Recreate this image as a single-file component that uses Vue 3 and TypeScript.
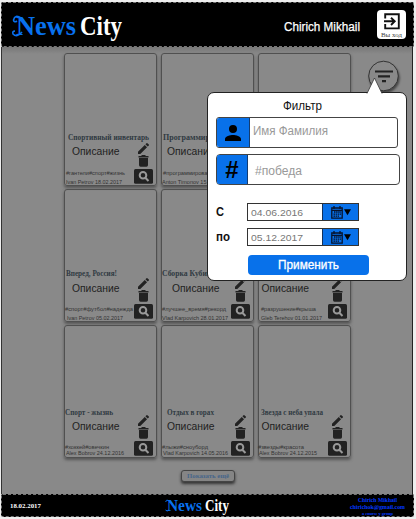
<script setup lang="ts">
import { defineComponent, h } from 'vue'

/* One line of text set to an exact measure; its baseline is the box's bottom edge. */
const FitText = defineComponent({
  props: {
    text: { type: String, required: true },
    w: { type: Number, required: true },
    size: { type: Number, required: true },
    x: { type: Number, default: 0 },
    high: { type: Number, default: 0 },
  },
  setup(p) {
    return () => {
      const box = p.high || p.size
      return h('svg', { width: p.w + p.x, height: box, class: 'fit' }, p.text ? [
        h('text', { x: p.x, y: box, 'font-size': p.size, textLength: p.w, lengthAdjust: 'spacingAndGlyphs', fill: 'currentColor' }, p.text),
      ] : [])
    }
  },
})

interface Card {
  title: string; tx: number; tw: number
  desc?: string; dx: number
  tags: string; gx: number; gw: number
  author: string; ax: number; aw: number
}
const rows: Card[][] = [
  [
    { title: 'Спортивный инвентарь', tx: 4, tw: 81, dx: 8, tags: '#гантели#спорт#жизнь', gx: 2, gw: 59, author: 'Ivan Petrov 18.02.2017', ax: 2, aw: 56 },
    { title: 'Программирование', tx: 2, tw: 72, dx: 6, tags: '#программирование', gx: 2, gw: 54, author: 'Anton Timonov 15.02.2017', ax: 1, aw: 66 },
    { title: '', tx: 3, tw: 34, desc: '', dx: 3, tags: '', gx: 2, gw: 30, author: '', ax: 2, aw: 56 },
  ],
  [
    { title: 'Вперед, Россия!', tx: 2, tw: 51, dx: 8, tags: '#спорт#футбол#надежда', gx: 1, gw: 68, author: 'Ivan Petrov 05.02.2017', ax: 3, aw: 56 },
    { title: 'Сборка Кубика', tx: 1, tw: 53, dx: 11, tags: '#лучшее_время#рекорд', gx: 1, gw: 64, author: 'Vlad Karpovich 28.01.2017', ax: 1, aw: 66 },
    { title: '', tx: 3, tw: 28, dx: 3.5, tags: '#разрушение#крыша', gx: 3, gw: 55, author: 'Gleb Terehov 01.01.2017', ax: 3, aw: 61 },
  ],
  [
    { title: 'Спорт - жызнь', tx: 1, tw: 48, dx: 8, tags: '#хоккей#овечкин', gx: 1, gw: 44, author: 'Alex Bobrov 24.12.2016', ax: 2, aw: 58 },
    { title: 'Отдых в горах', tx: 6, tw: 47, dx: 6, tags: '#лыжи#сноуборд', gx: 1, gw: 46, author: 'Vlad Karpovich 14.05.2016', ax: 2, aw: 65 },
    { title: 'Звезда с неба упала', tx: 3, tw: 62, dx: 3.5, tags: '#звезды#красота', gx: 0, gw: 46, author: 'Alex Bobrov 24.12.2015', ax: 1, aw: 58 },
  ],
]
const dates = [
  { label: 'С', w: 8, value: '04.06.2016' },
  { label: 'по', w: 14, value: '05.12.2017' },
]
</script>

<template>
  <div class="page">
    <header class="top">
      <svg class="logo" width="112" height="34" viewBox="0 0 112 34">
        <text x="4" y="26" textLength="60" lengthAdjust="spacingAndGlyphs" class="blue">News</text>
        <text x="68" y="26" textLength="42" lengthAdjust="spacingAndGlyphs" class="white">City</text>
        <path d="M9 9Q3 5 1.500 11Q2 14 5 12M10 23Q5 29 1 25Q0 22 3 22" class="swash" />
      </svg>
      <FitText class="user" text="Chirich Mikhail" :w="76" :size="12.500" :high="13" />
      <button class="logout">
        <svg width="16" height="17" viewBox="0 0 16 17">
          <path d="M1.200 5.500V1.200H14.800V15.400H1.200V11M0 8.300H10.500M7 4.700L10.700 8.300L7 12" fill="none" stroke="#111" stroke-width="1.900" />
        </svg>
        <FitText text="Вы ход" :w="21" :size="6" :high="7" />
      </button>
    </header>

    <main class="feed">
      <section class="cards">
        <template v-for="(row, r) in rows" :key="r">
          <article v-for="(c, i) in row" :key="i" class="card" :class="'row' + r">
            <FitText class="title" :text="c.title" :x="c.tx" :w="c.tw" :size="7.200" :high="7" />
            <div class="body">
              <div class="texts">
                <FitText class="desc" :text="c.desc ?? 'Описание'" :x="c.dx" :w="47.500" :size="10" />
                <FitText class="tags" :text="c.tags" :x="c.gx" :w="c.gw" :size="6" />
                <FitText class="author" :text="c.author" :x="c.ax" :w="c.aw" :size="6" />
              </div>
              <div class="actions">
                <svg width="11" height="11" viewBox="3 3 18 18"><path d="M3 17.250V21h3.750L17.810 9.940l-3.750-3.750L3 17.250zM20.710 7.040a1 1 0 0 0 0-1.410l-2.340-2.340a1 1 0 0 0-1.410 0l-1.830 1.830 3.750 3.750 1.830-1.830z" /></svg>
                <svg class="bin" width="11" height="12" viewBox="0 0 11 12"><path d="M.500 1H3L4 0H7L8 1H10.500V2.500H.500zM1 3H10V10Q10 11.700 8.500 11.700H2.500Q1 11.700 1 10z" /></svg>
                <svg class="find" width="19" height="15" viewBox="0 0 19 15">
                  <rect width="19" height="14.700" rx="1.500" /><circle cx="9" cy="6.300" r="3.300" class="lens" /><path d="M11.300 8.700L14.500 12" class="lens" />
                </svg>
              </div>
            </div>
          </article>
        </template>
      </section>
      <button class="more"><FitText text="Показать ещё" :w="42" :size="7" /></button>
    </main>

    <footer class="bottom">
      <FitText class="date" text="18.02.2017" :w="31" :size="7" />
      <svg class="brand" width="65" height="20" viewBox="0 0 65 20">
        <text x="2" y="15" textLength="35" lengthAdjust="spacingAndGlyphs" class="blue">News</text>
        <text x="40" y="15" textLength="24" lengthAdjust="spacingAndGlyphs" class="white">City</text>
        <path d="M4 5Q1 3 .800 6M4 14Q2 16 .500 14" class="swash thin" />
      </svg>
      <address>
        <FitText text="Chirich Mikhail" :w="39" :size="7" />
        <FitText text="chirichok@gmail.com" :w="55" :size="7" />
        <FitText text="a course y group" :w="31" :size="4.500" :high="6" />
      </address>
    </footer>

    <svg class="filter" width="36" height="36" viewBox="0 0 36 36">
      <circle cx="17.500" cy="16" r="14.800" />
      <path d="M9 11.500H27M12 16.300H24M16 21.200H20" />
    </svg>

    <form class="popup" @submit.prevent>
      <svg class="arrow" width="18" height="17" viewBox="0 0 18 17"><path d="M1 16.500L8.500 1L16 16.500" /></svg>
      <FitText class="heading" text="Фильтр" :w="39" :size="12.500" :high="13" />
      <label class="field">
        <span class="tab"><svg width="16" height="16" viewBox="4 4 16 16"><path d="M12 12a4 4 0 1 0 0-8 4 4 0 0 0 0 8zm0 2c-2.670 0-8 1.340-8 4v2h16v-2c0-2.660-5.330-4-8-4z" /></svg></span>
        <FitText text="Имя Фамилия" :w="75" :size="12.500" :high="13" :x="3" />
      </label>
      <label class="field hash">
        <span class="tab">#</span>
        <FitText text="#победа" :w="47" :size="12.500" :high="13" :x="7" />
      </label>
      <div v-for="d in dates" :key="d.label" class="period">
        <div class="name"><FitText :text="d.label" :w="d.w" :size="12" /></div>
        <div class="picker">
          <div class="value"><FitText :text="d.value" :w="52" :size="9.500" :high="10" /></div>
          <div class="open">
            <svg width="21" height="13" viewBox="0 0 21 13">
              <path d="M.800 2H11.200V12.200H.800zM1 4.300H11M3 0V3M9 0V3" fill="none" stroke="#06122b" stroke-width="1.300" />
              <path d="M3 6H10M2.500 8.100H10M2.500 10.200H8" stroke="#06122b" stroke-width="1.300" stroke-dasharray="1.500 .6" />
              <path d="M13 3.300H20L16.500 9.300z" />
            </svg>
          </div>
        </div>
      </div>
      <button class="apply"><FitText text="Применить" :w="61" :size="12" /></button>
    </form>
  </div>
</template>

<style>
body { background: #eee; overflow: hidden; }
</style>

<style scoped>
* { box-sizing: border-box; }
svg { display: block; flex: none; overflow: visible; }
button { padding: 0; margin: 0; border: 0; }
.page { position: relative; width: 416px; height: 519px; padding: 2px 2px 2px 1px; background: #eee; font-family: "Liberation Sans", Arial, sans-serif; display: flex; flex-direction: column; overflow: hidden; }
.top { width: 413px; height: 45px; flex: none; background: #000; border: 1px dashed #777; border-radius: 2px; display: flex; align-items: flex-start; padding: 6px 6px 0 10px; }
.logo { font: bold 28px "Liberation Serif", serif; }
.blue { fill: #0871ee; }
.white { fill: #fff; }
.swash { fill: none; stroke: #0871ee; stroke-width: 1.600; }
.thin { stroke-width: 1; }
.user { color: #fff; margin: 9px 18px 0 auto; stroke: #fff; stroke-width: .25px; }
.logout { width: 29px; height: 29px; margin-top: 1px; background: #fff; border-radius: 4px; display: flex; flex-direction: column; align-items: center; padding-top: 3px; color: #444; font-family: "Liberation Serif", serif; position: relative; left: -1px; }
.feed { width: 412px; height: 447px; flex: none; background: linear-gradient(#777, #898989 7px); border-left: 1px solid #333; border-right: 1px solid #222; padding: 6px 0 0 62px; }
.cards { display: grid; grid-template-columns: repeat(3, 93px); grid-auto-rows: 133px; gap: 3px 4px; }
.card { border: 1.500px solid #505050; border-radius: 3px; box-shadow: 0 2px 3px #555; padding-top: 79px; color: #333; margin-right: .500px; }
.card .fit { margin-left: -1px; }
.title { font-family: "Liberation Serif", serif; font-weight: bold; color: #303a42; }
.body { display: flex; justify-content: space-between; margin-top: 3px; }
.texts { width: 68px; padding-top: 1.500px; }
.desc { color: #222; }
.tags { margin-top: 14.500px; }
.author { margin-top: 2.500px; }
.actions { display: flex; flex-direction: column; align-items: center; margin-right: 3px; fill: #222; }
.bin { margin-top: 1px; }
.find { margin-top: 2px; }
.lens { fill: none; stroke: #999; stroke-width: 2; }
.row1 .body { margin-top: 2px; }
.row1 .texts { padding-top: 3.500px; }
.row1 .tags { margin-top: 13.500px; }
.row2 { padding-top: 82px; }
.row2 .body { margin-top: 0; }
.row2 .texts { padding-top: 5px; }
.row2 .tags { margin-top: 12.500px; }
.row2 .author { margin-top: .500px; }
.more { width: 54px; height: 12px; margin: 12px 0 0 117px; display: flex; justify-content: center; background: #858585; color: #47658a; border: 1px solid #444; border-radius: 3px; box-shadow: 0 2px 3px #333; font-family: "Liberation Serif", serif; font-weight: bold; }
.bottom { width: 413px; height: 23px; flex: none; background: #000; border: 1px dashed #777; border-radius: 2px; display: flex; justify-content: space-between; padding: 0 7px 0 8px; font-family: "Liberation Serif", serif; font-weight: bold; }
.date { color: #fff; margin-top: 6px; }
.brand { font-size: 17px; margin: 1px 0 0 71px; }
address { width: 57px; display: flex; flex-direction: column; align-items: center; color: #0038ff; font-style: normal; margin-left: 66px; }
.filter { position: absolute; left: 366px; top: 60px; filter: drop-shadow(1px 2px 1px #444); }
.filter circle { fill: #898989; stroke: #333; }
.filter path { fill: none; stroke: #222; stroke-width: 2.200; }
.popup { position: absolute; left: 207px; top: 92px; width: 200px; height: 189px; background: #fff; border: 1px solid #222; border-radius: 7px; padding: 4px 6px 0 8px; }
.arrow { position: absolute; left: 158px; top: -16px; }
.arrow path { fill: #fff; stroke: #333; stroke-width: .800; }
.heading { margin-left: 67px; color: #111; }
.field { display: flex; align-items: center; width: 182px; height: 31px; margin-top: 7px; border: 1px solid #444; border-radius: 3px; color: #999; }
.field .fit { margin-top: -9px; }
.tab { width: 33px; height: 29px; background: #0871ea; border-right: 1px solid #143c70; border-radius: 2px 0 0 2px; display: flex; align-items: center; justify-content: center; color: #000; font: bold 24px "Liberation Sans", sans-serif; }
.hash { width: 184px; margin-top: 6px; border-radius: 4px; margin-bottom: 18px; }
.hash .fit { margin-top: -3px; }
.hash .tab { width: 31px; }
.period { display: flex; align-items: center; height: 18px; margin-bottom: 7px; }
.name { width: 31px; font-weight: bold; color: #111; padding-bottom: 6px; }
.name svg { margin-top: 2px; }
.picker { display: flex; width: 112px; height: 18px; border: 1px solid #333; }
.value { width: 74px; padding: 2px 0 0 3px; color: #777; }
.open { flex: 1; background: #0871ea; border-left: 1px solid #14315a; padding: 2px 0 0 8px; }
.apply { width: 121px; height: 20px; margin: 9px 0 0 32px; background: #0871ea; border-radius: 4px; color: #fff; padding: 0 0 5px 30px; display: block; stroke: #fff; stroke-width: .3px; }
</style>
